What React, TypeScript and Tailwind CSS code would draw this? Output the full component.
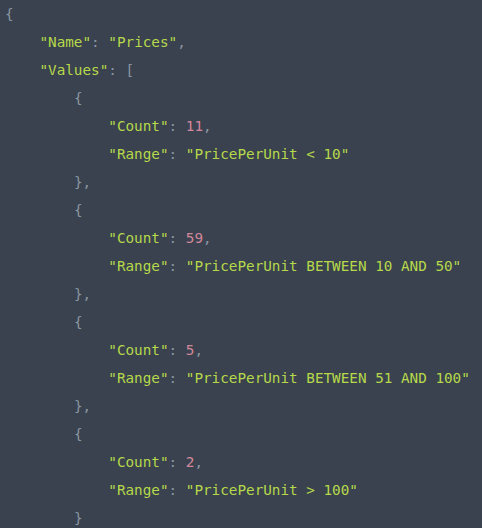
import React from "react";

type Tok = { t: string; c: "p" | "s" | "n" };

const P = (t: string): Tok => ({ t, c: "p" });
const S = (t: string): Tok => ({ t, c: "s" });
const N = (t: string): Tok => ({ t, c: "n" });

const items = [
  ["11", "PricePerUnit < 10"],
  ["59", "PricePerUnit BETWEEN 10 AND 50"],
  ["5", "PricePerUnit BETWEEN 51 AND 100"],
  ["2", "PricePerUnit > 100"],
];

const lines: { indent: number; toks: Tok[] }[] = [
  { indent: 0, toks: [P("{")] },
  { indent: 1, toks: [S('"Name"'), P(": "), S('"Prices"'), P(",")] },
  { indent: 1, toks: [S('"Values"'), P(": [")] },
];
items.forEach(([n, r], i) => {
  lines.push({ indent: 2, toks: [P("{")] });
  lines.push({ indent: 3, toks: [S('"Count"'), P(": "), N(n), P(",")] });
  lines.push({ indent: 3, toks: [S('"Range"'), P(": "), S(`"${r}"`)] });
  lines.push({ indent: 2, toks: [P(i < items.length - 1 ? "}," : "}")] });
});

const color = {
  p: "text-[#8a96a3]",
  s: "text-[#b7d84b]",
  n: "text-[#d3879c]",
};

export default function App() {
  return (
    <div className="w-[482px] h-[528px] overflow-hidden bg-[#39424e]">
      <pre className="m-0 pl-[5px] pt-0 font-['DejaVu_Sans_Mono',monospace] text-[14.3px] leading-[28px]">
        {lines.map((l, i) => (
          <div key={i} className="whitespace-pre">
            {"    ".repeat(l.indent)}
            {l.toks.map((tk, j) => (
              <span key={j} className={color[tk.c]}>
                {tk.t}
              </span>
            ))}
          </div>
        ))}
      </pre>
    </div>
  );
}
